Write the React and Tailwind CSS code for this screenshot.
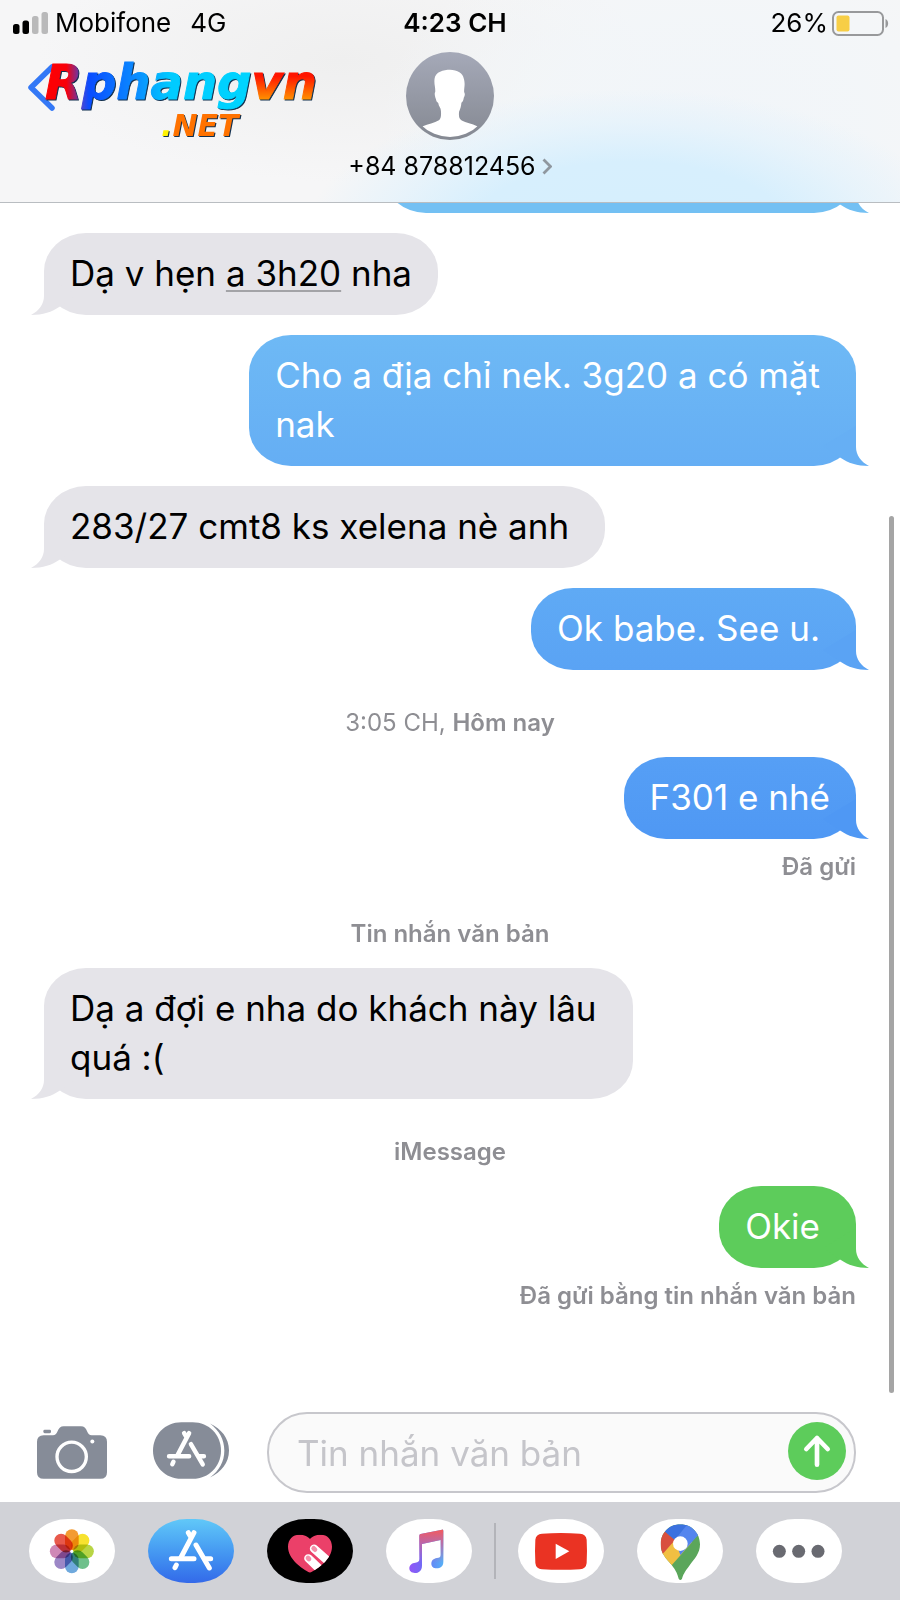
import React from 'react';
import clsx from 'clsx';

const messages = [
  { type: 'bubble', from: 'me', tone: 'sky', text: '', className: 'w-[472px] -mt-[72px]' },
  { type: 'bubble', from: 'them', text: <>Dạ v hẹn <span className="underline decoration-[#a3a3a7] decoration-2 underline-offset-4">a 3h20</span> nha</>, className: 'mt-5' },
  { type: 'bubble', from: 'me', tone: 'light', text: 'Cho a địa chỉ nek. 3g20 a có mặt\nnak', className: 'mt-5 pr-9' },
  { type: 'bubble', from: 'them', text: '283/27 cmt8 ks xelena nè anh', className: 'mt-5 pr-9' },
  { type: 'bubble', from: 'me', tone: 'medium', text: 'Ok babe. See u.', className: 'mt-5 pr-9' },
  { type: 'divider', text: <><span className="font-normal">3:05 CH, </span>Hôm nay</> },
  { type: 'bubble', from: 'me', tone: 'deep', text: 'F301 e nhé', className: 'mt-5' },
  { type: 'status', text: 'Đã gửi' },
  { type: 'divider', text: 'Tin nhắn văn bản' },
  { type: 'bubble', from: 'them', text: 'Dạ a đợi e nha do khách này lâu\nquá :(', className: 'mt-5 pr-9' },
  { type: 'divider', text: 'iMessage' },
  { type: 'bubble', from: 'me', tone: 'green', text: 'Okie', className: 'mt-5 pr-9' },
  { type: 'status', text: 'Đã gửi bằng tin nhắn văn bản' },
];

const tones = {
  sky: { body: 'bg-[#73c0f3]', tail: 'text-[#73c0f3]' },
  light: { body: 'bg-linear-to-b from-[#6eb9f5] to-[#65aef4]', tail: 'text-[#66aff4]' },
  medium: { body: 'bg-linear-to-b from-[#5faaf5] to-[#5aa3f4]', tail: 'text-[#5aa3f4]' },
  deep: { body: 'bg-linear-to-b from-[#569ff5] to-[#4f98f4]', tail: 'text-[#4f98f4]' },
  green: { body: 'bg-[#5dcc5b]', tail: 'text-[#5dcc5b]' },
  gray: { body: 'bg-[#e5e4e9]', tail: 'text-[#e5e4e9]' },
};

const Bubble = ({ from, tone = 'gray', text, className = '' }) => {
  const mine = from === 'me';
  const colors = tones[tone];

  return (
    <div
      className={clsx(
        'relative min-h-[82px] rounded-[42px/38px] px-[26px] pt-4 pb-[17px] text-[35px] leading-[49px] whitespace-pre-line',
        mine ? 'self-end text-white' : 'self-start text-black',
        colors.body,
        className
      )}
    >
      {text}
      <svg
        viewBox="0 0 50 40"
        className={clsx('absolute bottom-0 h-10 w-[50px]', colors.tail, mine ? '-right-[13px]' : '-left-[13px] -scale-x-100')}
        aria-hidden="true"
      >
        <path d="M37 0V21C37 29 42 36 50 40C38 40 29 37 21.500 31.800L4 20Z" fill="currentColor" />
      </svg>
    </div>
  );
};

const Divider = ({ text }) => (
  <p className="mt-[39px] text-center text-[24px] leading-7 font-semibold text-[#8e8e93]">{text}</p>
);

const Status = ({ text }) => (
  <p className="mt-3.5 text-right text-[24px] leading-7 font-semibold text-[#8e8e93]">{text}</p>
);

const StatusBar = () => (
  <div className="grid h-[46px] grid-cols-3 items-center pr-[11px] pl-[13px] text-[26px] leading-7">
    <div className="flex items-center gap-[7px]">
      <svg viewBox="0 0 35 22" className="h-[22px] w-[35px]" aria-hidden="true">
        <rect x="0" y="12" width="6.500" height="10" rx="2.500" fill="#000" />
        <rect x="9.500" y="8.500" width="6.500" height="13.500" rx="2.500" fill="#000" />
        <rect x="19" y="4" width="6.500" height="18" rx="2.500" fill="#b9b9ba" />
        <rect x="28.500" y="0" width="6.500" height="22" rx="2.500" fill="#b9b9ba" />
      </svg>
      <span>Mobifone</span>
      <span className="ml-3">4G</span>
    </div>
    <div className="pl-2 text-center font-semibold">4:23 CH</div>
    <div className="flex items-center justify-end gap-1">
      <span>26%</span>
      <svg viewBox="0 0 57 25" className="h-[25px] w-[57px]" aria-hidden="true">
        <rect x="1" y="1" width="50" height="23" rx="5.500" fill="none" stroke="#98999b" strokeWidth="2" />
        <rect x="4.500" y="4.500" width="13" height="16" rx="2" fill="#f7ce46" />
        <path d="M53.500 8C57 9.500 57 15.500 53.500 17Z" fill="#98999b" />
      </svg>
    </div>
  </div>
);

const Logo = () => (
  <svg viewBox="0 0 290 100" className="-ml-[11px] h-[100px] w-[290px]" role="img" aria-label="Rphangvn.NET">
    <defs>
      <linearGradient id="logoMain" gradientUnits="userSpaceOnUse" x1="0" y1="0" x2="204" y2="0">
        <stop offset="0" stopColor="#ff0000" />
        <stop offset="0.110" stopColor="#f8000a" />
        <stop offset="0.190" stopColor="#4047d8" />
        <stop offset="0.220" stopColor="#0a4cff" />
        <stop offset="0.450" stopColor="#0a8bff" />
        <stop offset="0.620" stopColor="#00cbff" />
        <stop offset="1" stopColor="#00d4ff" />
      </linearGradient>
      <linearGradient id="logoVn" gradientUnits="userSpaceOnUse" x1="0" y1="20" x2="0" y2="48">
        <stop offset="0.150" stopColor="#ff1500" />
        <stop offset="1" stopColor="#ff9300" />
      </linearGradient>
    </defs>
    <g
      fontFamily="'DejaVu Sans', sans-serif"
      fontWeight="700"
      fontStyle="italic"
      className="drop-shadow-[1px_1px_0px_#12304f]"
    >
      <text x="1" y="47" fontSize="48" fill="url(#logoMain)" stroke="url(#logoMain)">
        Rphang<tspan fill="url(#logoVn)" stroke="url(#logoVn)">vn</tspan>
      </text>
      <text x="117" y="84" fontSize="30" fill="#ff7200">
        <tspan fill="#fff200">.</tspan>NET
      </text>
    </g>
  </svg>
);

const Avatar = () => (
  <svg viewBox="0 0 262 262" className="size-[88px]" aria-hidden="true">
    <defs>
      <linearGradient id="avatarBg" x1="0" y1="0" x2="0" y2="1">
        <stop offset="0" stopColor="#a5a9b8" />
        <stop offset="1" stopColor="#858992" />
      </linearGradient>
      <clipPath id="avatarClip">
        <circle cx="131" cy="131" r="122" />
      </clipPath>
    </defs>
    <circle cx="131" cy="131" r="131" fill="url(#avatarBg)" />
    <path
      clipPath="url(#avatarClip)"
      fill="#fff"
      d="M131 53C112 53 87 59 85 80C83 96 88 104 87 119C84 122 86 132 89 140C90 148 93 149 96 152C97 162 104 166 104 176C105 190 104 198 98 203C85 211 65 214 50 221L20 262H242L212 221C197 214 178 210 166 204C157 199 157 190 158 178C162 168 164 162 165 151C170 147 171 142 172 136C176 130 176 124 173 119C173 104 177 96 172 79C170 64 153 53 131 53Z"
    />
  </svg>
);

const Header = () => (
  <header className="relative z-10 border-b border-[#b9bdc1] bg-[#f6f6f7] bg-[radial-gradient(ellipse_36%_72%_at_70%_116%,#d5effd_0%,#d7effd_50%,#e2f2fcb0_76%,#f1f6fa00_100%),radial-gradient(ellipse_36%_100%_at_78%_60%,#f1f5f9_0%,#f2f6f9cc_50%,#f5f6f800_100%),radial-gradient(ellipse_34%_60%_at_38%_30%,#efefef_0%,#efefef00_100%)]">
    <StatusBar />
    <div className="grid grid-cols-[1fr_auto_1fr] items-start pb-[22px]">
      <div className="flex h-0 items-start pt-1.5 pl-7">
        <button type="button" aria-label="Quay lại" className="mt-3 shrink-0">
          <svg viewBox="0 0 27 47" className="h-[47px] w-[27px]" aria-hidden="true">
            <path d="M24 3L3 23.500L24 44" fill="none" stroke="#3478f6" strokeWidth="5.500" strokeLinecap="round" strokeLinejoin="round" />
          </svg>
        </button>
        <Logo />
      </div>
      <button type="button" className="flex flex-col items-center pt-1.5">
        <Avatar />
        <span className="mt-3 flex items-center gap-1.5 text-[25px] leading-7">
          +84 878812456
          <svg viewBox="0 0 10 17" className="h-[17px] w-2.5" aria-hidden="true">
            <path d="M1.500 1.500L8.500 8.500L1.500 15.500" fill="none" stroke="#8f979f" strokeWidth="2.800" />
          </svg>
        </span>
      </button>
      <div />
    </div>
  </header>
);

const AppStoreMark = (props) => (
  <g fill="none" stroke="#fff" strokeWidth="15" strokeLinecap="round" {...props}>
    <path d="M138 41L98 117M121 41L129 55M144 78L184 147M85 138L81 146" />
    <path d="M70 119H138M173 119H188" />
  </g>
);

const CameraIcon = () => (
  <svg viewBox="0 0 210 158" className="h-[53px] w-[70px]" aria-hidden="true">
    <path
      fill="#868c98"
      d="M20 27H48C62 27 61 10 69 4Q73 0 80 0H132Q139 0 143 4C151 10 150 27 164 27H190Q210 27 210 47V138Q210 158 190 158H20Q0 158 0 138V47Q0 27 20 27Z"
    />
    <rect x="19" y="11" width="23" height="10" rx="4" fill="#868c98" />
    <circle cx="104" cy="92" r="44" fill="none" stroke="#fff" strokeWidth="10" />
    <circle cx="166" cy="46" r="6" fill="#fff" />
  </svg>
);

const AppsIcon = () => (
  <svg viewBox="0 0 228 170" className="h-[57px] w-[76px]" aria-hidden="true">
    <path fill="#868c98" d="M85 0H119C168 0 204 38 204 85C204 132 168 170 119 170H85C36 170 0 132 0 85C0 38 36 0 85 0Z" />
    <path fill="#868c98" d="M171 4C205 20 228 48 228 85C228 122 205 150 171 166C199 145 214 118 214 85C214 52 199 25 171 4Z" />
    <AppStoreMark transform="translate(-14 -3.500) scale(0.887)" />
  </svg>
);

const petals = ['#f39b32', '#f7e22f', '#b8d545', '#6fc08b', '#6fa9dd', '#9c87c6', '#cf88b6', '#e8594c'];

const PhotosIcon = () => (
  <g>
    {petals.map((color, i) => (
      <rect
        key={color}
        x="108"
        y="31"
        width="41"
        height="62"
        rx="20.500"
        fill={color}
        transform={`rotate(${i * 45} 128.500 97)`}
        className="mix-blend-multiply"
      />
    ))}
    <circle cx="128.500" cy="97" r="4" fill="#fff" />
  </g>
);

const HeartIcon = () => (
  <g>
    <clipPath id="heartClip">
      <path d="M129 161C105 149 63 120 63 83C63 61 78 47 96 47C112 47 124 53 129 60C134 53 146 47 162 47C180 47 195 61 195 83C195 120 153 149 129 161Z" />
    </clipPath>
    <g clipPath="url(#heartClip)">
      <rect x="60" y="40" width="140" height="125" fill="#eb4069" />
      <path d="M141 89L195 137M124 118L174 166" stroke="#fff" strokeWidth="25" strokeLinecap="round" />
    </g>
    <path d="M140 88L144 92M123 117L126 120" stroke="#f490aa" strokeWidth="14" strokeLinecap="round" />
  </g>
);

const MusicIcon = () => (
  <g>
    <linearGradient id="musicTop" gradientUnits="userSpaceOnUse" x1="0" y1="32" x2="0" y2="150">
      <stop offset="0" stopColor="#f4595c" />
      <stop offset="0.350" stopColor="#c8649c" stopOpacity="0.850" />
      <stop offset="0.850" stopColor="#b866b4" stopOpacity="0" />
    </linearGradient>
    <linearGradient id="musicBase" gradientUnits="userSpaceOnUse" x1="70" y1="0" x2="172" y2="0">
      <stop offset="0" stopColor="#9355f7" />
      <stop offset="0.400" stopColor="#6f6bf5" />
      <stop offset="1" stopColor="#55b1f6" />
    </linearGradient>
    {['url(#musicBase)', 'url(#musicTop)'].map((fill) => (
      <path
        key={fill}
        fill={fill}
        d="M104 45L168 32Q172 31 172 36V128C172 142 163 148 152 148C142 148 136 142 136 134C136 124 143 119 153 117C161 116 164 114 164 107V63L108 75V140C108 155 98 162 87 162C76 162 70 156 70 148C70 138 78 132 88 131C97 130 100 127 100 120V50Q100 46 104 45Z"
      />
    ))}
  </g>
);

const YoutubeIcon = () => (
  <g>
    <path fill="#ea3323" d="M72 44Q129 40 186 44Q204 45 206 62Q208 97 206 132Q204 150 186 151Q129 154 72 151Q54 150 52 132Q50 97 52 62Q54 45 72 44Z" />
    <path fill="#fff" d="M113 74L154 97L113 120Z" />
  </g>
);

const MapsIcon = () => (
  <g>
    <clipPath id="pinClip">
      <path d="M130 16C163 16 189 42 189 76C189 103 173 119 157 140C143 158 138 168 135 179Q130 187 125 179C122 167 118 156 104 138C87 118 71 104 71 76C71 42 97 16 130 16Z" />
    </clipPath>
    <g clipPath="url(#pinClip)">
      <rect x="65" y="10" width="130" height="180" fill="#5ba65b" />
      <path fill="#f1bf42" d="M60 119L112 58L165 70L104 139Z" />
      <path fill="#d8503f" d="M60 20L84 37L114 63L60 124Z" />
      <path fill="#3b71df" d="M84 38L70 10H150V20L114 64Z" />
      <path fill="#5485ee" d="M114 62L156 10L200 30L130 108Z" />
    </g>
    <circle cx="130" cy="74" r="22" fill="#fff" />
  </g>
);

const MoreIcon = () => (
  <g fill="#696a71">
    <circle cx="70" cy="97" r="19.500" />
    <circle cx="128" cy="97" r="19.500" />
    <circle cx="186" cy="97" r="19.500" />
  </g>
);

const AppButton = ({ label, className = 'bg-white', children }) => (
  <button type="button" aria-label={label} className={clsx('shrink-0 overflow-hidden rounded-[39px/32px]', className)}>
    <svg viewBox="0 0 258 192" className="h-16 w-[86px]" aria-hidden="true">
      {children}
    </svg>
  </button>
);

const Composer = () => (
  <form className="flex items-center pt-[19px] pr-11 pb-[9px] pl-[37px]" onSubmit={(e) => e.preventDefault()}>
    <button type="button" aria-label="Máy ảnh" className="shrink-0">
      <CameraIcon />
    </button>
    <button type="button" aria-label="Ứng dụng" className="mb-1 ml-[46px] shrink-0">
      <AppsIcon />
    </button>
    <div className="ml-[38px] flex h-[81px] min-w-0 flex-1 items-center rounded-[40px] border-2 border-[#c7c7cc] bg-[#fafafa] pr-2 pl-7">
      <input
        type="text"
        aria-label="Tin nhắn văn bản"
        placeholder="Tin nhắn văn bản"
        className="h-full min-w-0 flex-1 bg-transparent text-[35px] outline-none placeholder:text-[#c5c5ca]"
      />
      <button type="submit" aria-label="Gửi" className="mb-1 shrink-0">
        <svg viewBox="0 0 174 174" className="size-[58px]" aria-hidden="true">
          <circle cx="87" cy="87" r="87" fill="#5dcc5b" />
          <path d="M87 128V48M55 81L87 48L119 81" fill="none" stroke="#fff" strokeWidth="14" strokeLinecap="round" strokeLinejoin="round" />
        </svg>
      </button>
    </div>
  </form>
);

const AppDrawer = () => (
  <nav aria-label="Ứng dụng iMessage" className="flex items-center bg-[#d1d2d7] pt-[17px] pb-[17px] pl-[29px]">
    <div className="flex gap-[33px]">
      <AppButton label="Ảnh"><PhotosIcon /></AppButton>
      <AppButton label="App Store" className="bg-linear-to-b from-[#61c8f8] to-[#3469e9]"><AppStoreMark /></AppButton>
      <AppButton label="Digital Touch" className="bg-black"><HeartIcon /></AppButton>
      <AppButton label="Nhạc"><MusicIcon /></AppButton>
    </div>
    <div className="mx-[22px] h-14 w-0.5 bg-[#b3b4b9]" />
    <div className="flex gap-[33px]">
      <AppButton label="YouTube"><YoutubeIcon /></AppButton>
      <AppButton label="Google Maps"><MapsIcon /></AppButton>
      <AppButton label="Thêm"><MoreIcon /></AppButton>
    </div>
  </nav>
);

const App = () => (
  <div className="flex min-h-screen flex-col bg-white font-['Inter',sans-serif] text-black">
    <Header />
    <main className="relative flex flex-1 flex-col overflow-hidden px-11">
      {messages.map(({ type, ...item }, i) => {
        if (type === 'divider') return <Divider key={i} {...item} />;
        if (type === 'status') return <Status key={i} {...item} />;
        return <Bubble key={i} {...item} />;
      })}
      {/* Scroll indicator */}
      <div className="absolute top-[313px] right-1.5 bottom-0 w-[5px] rounded-full bg-[#a5a5a5]" />
    </main>
    <Composer />
    <AppDrawer />
  </div>
);

export default App;
